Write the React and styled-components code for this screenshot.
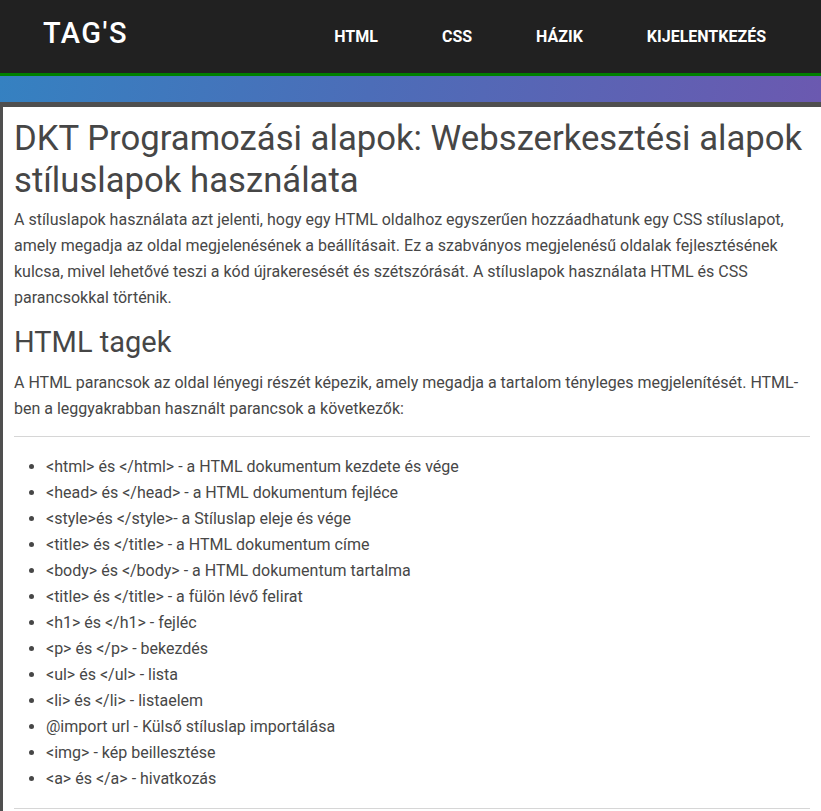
import React from 'react';
import styled, { createGlobalStyle } from 'styled-components';

const GlobalStyle = createGlobalStyle`
  * {
    box-sizing: border-box;
  }
  body {
    margin: 0;
    background: #4f4f4f;
    font-family: Roboto, "Noto Sans", "Liberation Sans", sans-serif;
  }
`;

const Header = styled.header`
  display: flex;
  align-items: center;
  justify-content: space-between;
  height: 76px;
  padding: 0 55px 0 43px;
  background: #212121;
  border-bottom: 3px solid #008000;
`;

const Logo = styled.div`
  color: #fff;
  font-size: 29px;
  font-weight: 500;
  letter-spacing: 1.5px;
  margin-top: -8px;
`;

const Nav = styled.nav`
  display: flex;
  gap: 64px;
`;

const NavLink = styled.a`
  color: #fff;
  font-size: 16px;
  font-weight: 700;
  text-decoration: none;
`;

const Band = styled.div`
  height: 26px;
  background: linear-gradient(100deg, #3581c1 0%, #4c6db8 45%, #6b59b0 100%);
`;

const Main = styled.main`
  margin: 5px 0 0 3px;
  padding: 10px 11px 20px;
  background: #fff;
  color: #474747;
`;

const Title = styled.h1`
  margin: 0 0 6px;
  font-size: 34.7px;
  line-height: 42px;
  font-weight: 400;
  color: #464646;
`;

const Subtitle = styled.h2`
  margin: 13px 0 10px;
  font-size: 29px;
  line-height: 36px;
  font-weight: 400;
  color: #464646;
`;

const Text = styled.p`
  margin: 0;
  font-size: 16px;
  line-height: 26px;
`;

const Rule = styled.hr`
  border: none;
  border-top: 1px solid #d6d6d6;
  margin: ${p => p.$top}px 0 0;
`;

const List = styled.ul`
  margin: 17px 0 16px;
  padding-left: 32px;
  font-size: 16px;
  line-height: 26px;
`;

const items = [
  '<html> és </html> - a HTML dokumentum kezdete és vége',
  '<head> és </head> - a HTML dokumentum fejléce',
  '<style>és </style>- a Stíluslap eleje és vége',
  '<title> és </title> - a HTML dokumentum címe',
  '<body> és </body> - a HTML dokumentum tartalma',
  '<title> és </title> - a fülön lévő felirat',
  '<h1> és </h1> - fejléc',
  '<p> és </p> - bekezdés',
  '<ul> és </ul> - lista',
  '<li> és </li> - listaelem',
  '@import url - Külső stíluslap importálása',
  '<img> - kép beillesztése',
  '<a> és </a> - hivatkozás',
];

const App = () => {
  return (
    <>
      <GlobalStyle />
      <Header>
        <Logo>TAG'S</Logo>
        <Nav>
          <NavLink href="#">HTML</NavLink>
          <NavLink href="#">CSS</NavLink>
          <NavLink href="#">HÁZIK</NavLink>
          <NavLink href="#">KIJELENTKEZÉS</NavLink>
        </Nav>
      </Header>
      <Band />
      <Main>
        <Title>DKT Programozási alapok: Webszerkesztési alapok stíluslapok használata</Title>
        <Text>
          A stíluslapok használata azt jelenti, hogy egy HTML oldalhoz egyszerűen hozzáadhatunk egy CSS stíluslapot,
          amely megadja az oldal megjelenésének a beállításait. Ez a szabványos megjelenésű oldalak fejlesztésének
          kulcsa, mivel lehetővé teszi a kód újrakeresését és szétszórását. A stíluslapok használata HTML és CSS
          parancsokkal történik.
        </Text>
        <Subtitle>HTML tagek</Subtitle>
        <Text>
          A HTML parancsok az oldal lényegi részét képezik, amely megadja a tartalom tényleges megjelenítését. HTML-ben
          a leggyakrabban használt parancsok a következők:
        </Text>
        <Rule $top={14} />
        <List>
          {items.map((item, i) => (
            <li key={i}>{item}</li>
          ))}
        </List>
        <Rule $top={0} />
      </Main>
    </>
  );
};

export default App;
